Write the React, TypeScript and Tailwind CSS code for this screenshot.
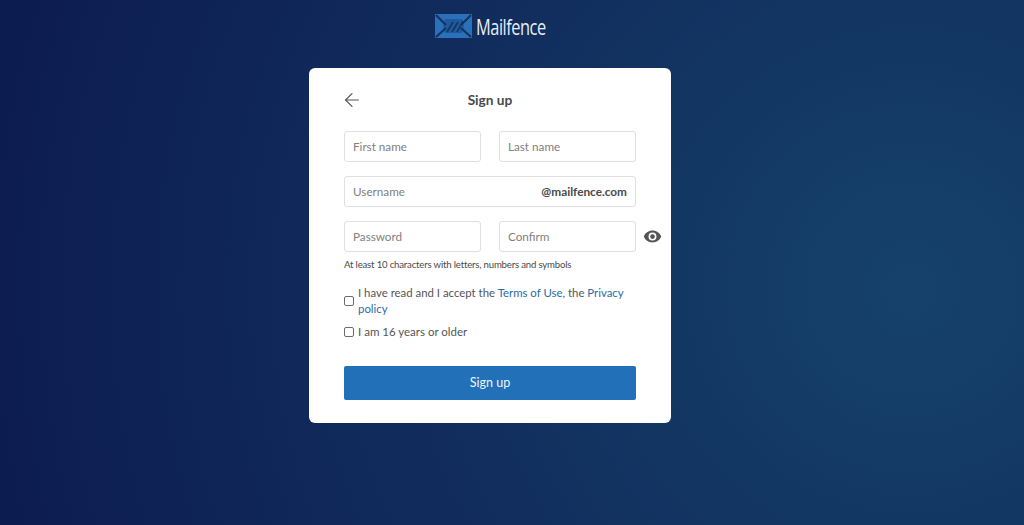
import { ArrowLeft } from 'lucide-react';

function Logo() {
  return (
    <div className="flex items-start gap-[4px] h-[24px]">
      <svg width="37" height="24" viewBox="0 0 37 24">
        <rect width="37" height="24" fill="#2b70ba" />
        <path d="M10 5 H27 L29 12 L27 19 H10 L8 12 Z" fill="#1f5a9e" />
        <path d="M1 1 L11 11 M36 1 L26 11 M1 23 L11 14 M36 23 L26 14" stroke="#14335f" strokeWidth="2.2" fill="none" />
        <path d="M12 18 L18 8 M17 18 L23 8 M22 18 L28 7" stroke="#14335f" strokeWidth="1.5" fill="none" />
      </svg>
      <div className="w-[69px] whitespace-nowrap pt-[3px]">
        <span className="inline-block font-['Open_Sans',sans-serif] text-[21px] leading-none text-[#e8eef5] tracking-[-0.6px] [transform:scaleX(0.78)] origin-left">Mailfence</span>
      </div>
    </div>
  );
}

function Field({ placeholder, suffix }: { placeholder: string; suffix?: string }) {
  return (
    <div className="flex-1 h-[31px] flex items-center justify-between border border-[#dddfe2] rounded-[3px] px-[8px] text-[11.7px]">
      <span className="text-[#808080]">{placeholder}</span>
      {suffix && <span className="font-bold text-[#4a4a4a] text-[11.8px]">{suffix}</span>}
    </div>
  );
}

function Check() {
  return <span className="block w-[10px] h-[10px] shrink-0 border border-[#6b6b6b] rounded-[2px] bg-white" />;
}

export default function App() {
  return (
    <div className="w-[1024px] h-[525px] overflow-hidden pr-[44px] pt-[14px] bg-[radial-gradient(circle_at_89%_55%,#15426b_0%,#133763_25%,#10285a_65%,#0c1b50_100%)] font-['Lato',sans-serif]">
      <div className="flex flex-col items-center">
        <Logo />
        <div className="mt-[30px] w-[362px] h-[355px] bg-white rounded-[6px] px-[35px] pt-[22px]">
          <div className="flex items-center h-[20px]">
            <ArrowLeft className="w-[22px] h-[22px] shrink-0 -ml-[3px] text-[#555555]" strokeWidth={1.3} />
            <h1 className="flex-1 text-center pr-[19px] text-[13.7px] font-bold text-[#4a4a4a]">Sign up</h1>
          </div>
          <div className="mt-[21px] flex gap-[18px]">
            <Field placeholder="First name" />
            <Field placeholder="Last name" />
          </div>
          <div className="mt-[14px] flex">
            <Field placeholder="Username" suffix="@mailfence.com" />
          </div>
          <div className="relative mt-[14px] flex gap-[18px]">
            <Field placeholder="Password" />
            <Field placeholder="Confirm" />
            <svg className="absolute left-[299px] top-[6px]" width="19" height="19" viewBox="0 0 24 24" fill="#555555">
              <path d="M12 4.5C7 4.5 2.7 7.6 1 12c1.7 4.4 6 7.5 11 7.5s9.3-3.1 11-7.5c-1.7-4.4-6-7.5-11-7.5zM12 17a5 5 0 1 1 0-10 5 5 0 0 1 0 10zm0-8a3 3 0 1 0 0 6 3 3 0 0 0 0-6z" />
            </svg>
          </div>
          <p className="mt-[6px] text-[9.6px] tracking-[-0.18px] leading-[13px] text-[#4a4a4a]">At least 10 characters with letters, numbers and symbols</p>
          <div className="mt-[14px] flex items-center gap-[4px] text-[11.4px] leading-[16px] text-[#555555]">
            <Check />
            <div>
              <div>
                I have read and I accept the <span className="text-[#2b6ca8]">Terms of Use</span>, the <span className="text-[#2b6ca8]">Privacy</span>
              </div>
              <div className="text-[#2b6ca8]">policy</div>
            </div>
          </div>
          <div className="mt-[7px] flex items-center gap-[4px] text-[11.5px] leading-[16px] text-[#555555]">
            <Check />
            <span>I am 16 years or older</span>
          </div>
          <button className="mt-[26px] w-full h-[34px] rounded-[2px] bg-[#2170b8] text-[#f0f5fa] text-[12.5px]">Sign up</button>
        </div>
      </div>
    </div>
  );
}
